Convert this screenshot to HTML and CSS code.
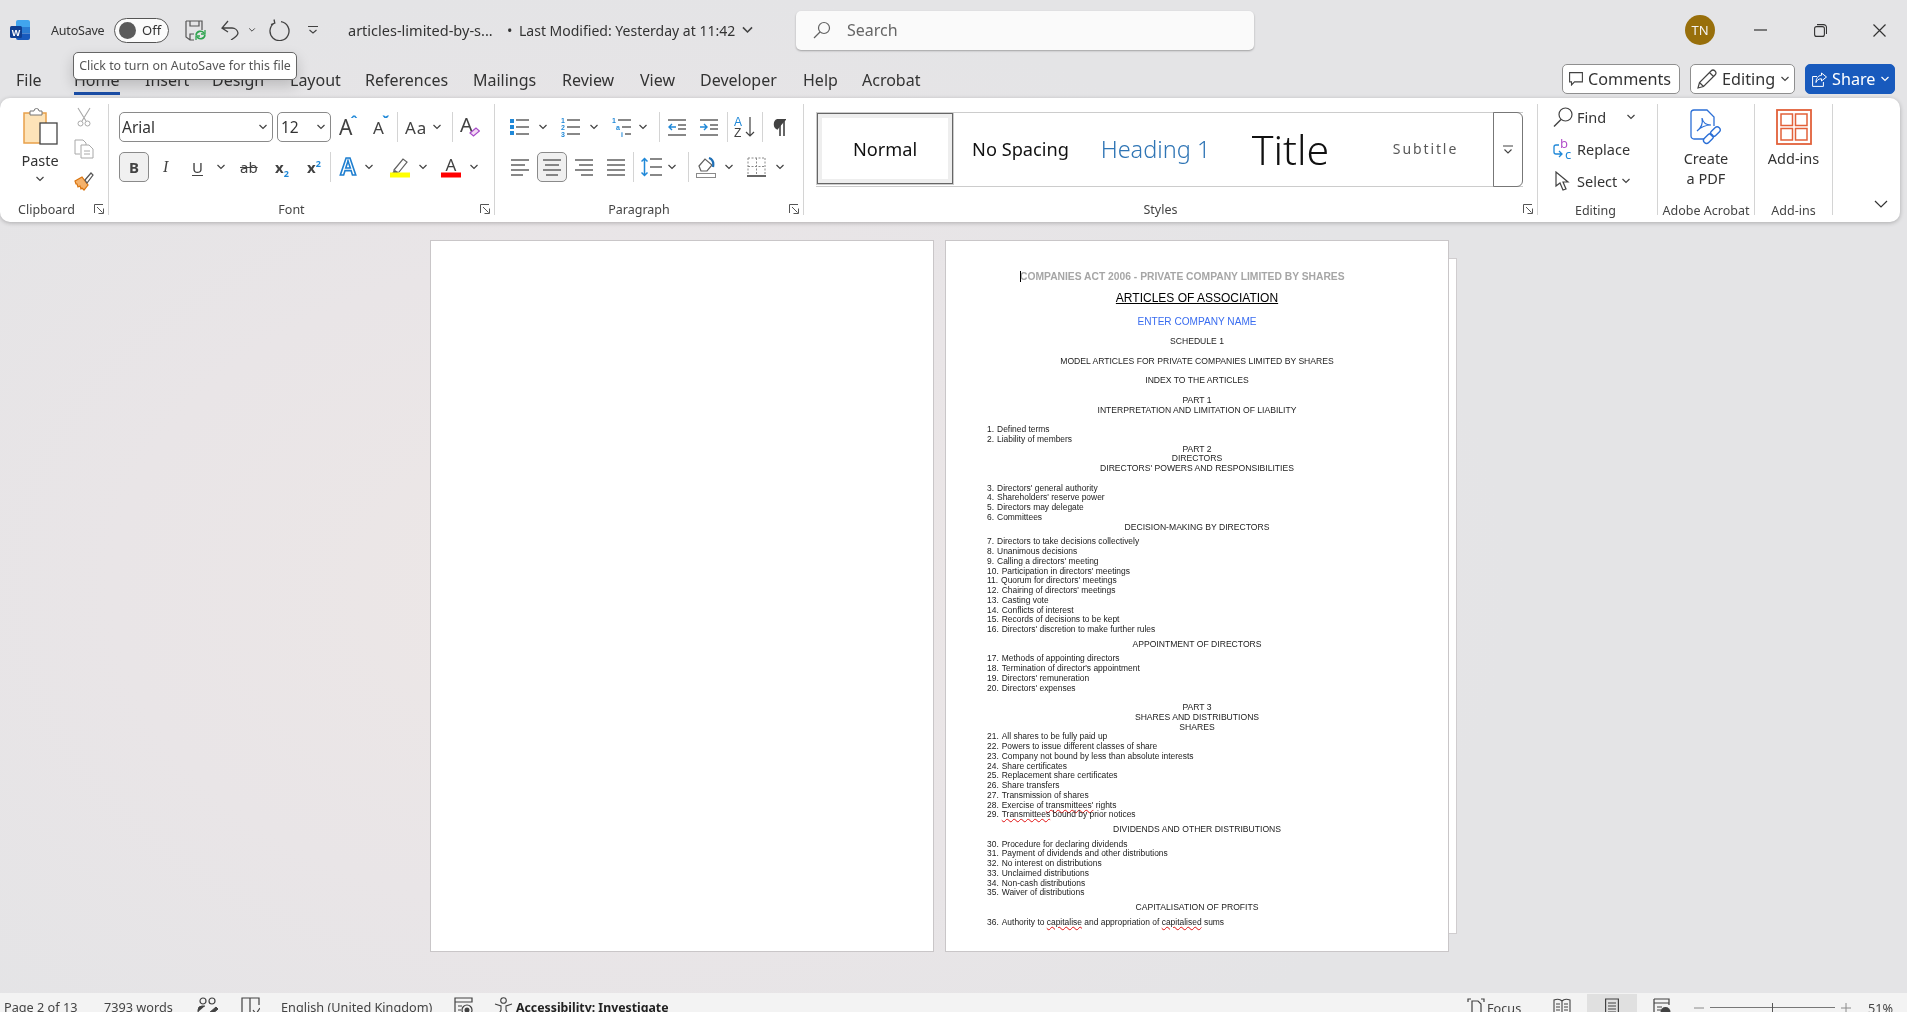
FILE: index.html
```html
<!DOCTYPE html>
<html lang="en">
<head>
    <meta charset="UTF-8">
    <title>articles-limited-by-shares - Word</title>
    <link rel="stylesheet" href="styles.css">
</head>
<body>
    <svg class="sprite" aria-hidden="true">
        <symbol id="chev" viewBox="0 0 10 6"><path d="M1.500 1l3.500 3.500L8.500 1" fill="none" stroke="#424242" stroke-width="1.200"/></symbol>
        <symbol id="launch" viewBox="0 0 10 10"><path d="M.5 9V.5H9M3 3l5.500 5.500M4.500 9.500h5v-5" fill="none" stroke="#555" stroke-width="1"/></symbol>
        <symbol id="lines-left" viewBox="0 0 20 20"><path d="M1 3h18M1 8h14M1 13h18M1 18h12" stroke="#616161" stroke-width="1.500"/></symbol>
    </svg>

    <header class="titlebar">
        <svg class="word-logo" viewBox="0 0 20 20" width="20" height="20">
            <path d="M6 2a2 2 0 0 1 2-2h10a2 2 0 0 1 2 2v5H6z" fill="#41a5ee"/>
            <rect x="6" y="7" width="14" height="6.500" fill="#2b7cd3"/>
            <path d="M6 13.500h14V18a2 2 0 0 1-2 2H8a2 2 0 0 1-2-2z" fill="#185abd"/>
            <rect x="0" y="6" width="12" height="12" rx="1.500" fill="#103f91"/>
            <text x="6" y="15.500" class="word-w">W</text>
        </svg>
        <span class="autosave">AutoSave</span>
        <div class="toggle"><span class="knob"></span><span>Off</span></div>
        <svg width="21" height="21" viewBox="0 0 21 21"><path d="M1 1h16v9M1 1v16l4 3h4M5 1v5h9V1M5 20v-6h4" fill="none" stroke="#555" stroke-width="1.200"/><path d="M11 15a4.500 4.500 0 0 1 8-2M20 15a4.500 4.500 0 0 1-8 2" fill="none" stroke="#2ea44f" stroke-width="1.600"/><path d="M20 10v4h-4M11 20v-4h4" fill="none" stroke="#2ea44f" stroke-width="1.300"/></svg>
        <svg width="19" height="20" viewBox="0 0 19 20"><path d="M1 8h10a6 6 0 0 1 6 5c0 2-2 4-7 7M7 1L1 8l6 4" fill="none" stroke="#424242" stroke-width="1.300"/></svg>
        <svg class="chev" width="8" height="6"><use href="#chev"/></svg>
        <svg width="22" height="22" viewBox="0 0 22 22"><path d="M6.500 4A9.500 9.500 0 1 0 13 2.700M6 .5L6.800 4 3 5.500" fill="none" stroke="#424242" stroke-width="1.300"/></svg>
        <svg width="10" height="8" viewBox="0 0 10 8"><path d="M0 .5h10M1.500 4l3.500 3 3.500-3" fill="none" stroke="#424242" stroke-width="1.100"/></svg>
        <span class="doc-name">articles-limited-by-s...</span>
        <span class="doc-name">&bull;</span>
        <span class="doc-name modified">Last Modified: Yesterday at 11:42</span>
        <svg width="13" height="8"><use href="#chev"/></svg>
        <div class="search">
            <svg width="18" height="18" viewBox="0 0 18 18"><circle cx="11" cy="7" r="5.500" fill="none" stroke="#616161" stroke-width="1.200"/><path d="M7 11l-6 6" stroke="#616161" stroke-width="1.200"/></svg>
            <span>Search</span>
        </div>
        <div class="avatar">TN</div>
        <svg width="13" height="2"><path d="M0 1h13" stroke="#333" stroke-width="1.200"/></svg>
        <svg width="13" height="13" viewBox="0 0 13 13"><rect x=".6" y="2.600" width="9.800" height="9.800" rx="2" fill="none" stroke="#333" stroke-width="1.100"/><path d="M3 .6h6.500a3 3 0 0 1 3 3V10" fill="none" stroke="#333" stroke-width="1.100"/></svg>
        <svg width="13" height="13" viewBox="0 0 13 13"><path d="M.5.5l12 12M12.500.5l-12 12" stroke="#333" stroke-width="1.200"/></svg>
    </header>

    <div class="tabbar">
        <nav class="tabs">
            <a>File</a><a class="active">Home</a><a>Insert</a><a>Design</a><a>Layout</a><a>References</a><a>Mailings</a><a>Review</a><a>View</a><a>Developer</a><a>Help</a><a>Acrobat</a>
        </nav>
        <div class="actions">
            <button class="comments">
                <svg width="14" height="14" viewBox="0 0 14 14"><path d="M.6.6h12.800v9.300H5.500L2.500 13v-3.100H.6z" fill="none" stroke="#424242" stroke-width="1.100"/></svg>
                Comments
            </button>
            <button class="editing">
                <svg width="20" height="20" viewBox="0 0 20 20"><path d="M1 19l1.500-5.500L14 2a2.500 2.500 0 0 1 4 4L6.500 17.500zM2.500 13.500l4 4M12.500 3.500l4 4" fill="none" stroke="#424242" stroke-width="1.200"/></svg>
                Editing
                <svg width="10" height="6"><use href="#chev"/></svg>
            </button>
            <button class="share">
                <svg width="15" height="15" viewBox="0 0 15 15"><path d="M5 4.500H.6v9.900h10.800V10M9.500 1l5 4-5 4V6.800C6.500 6.800 5 8 4 10.500 4 6.500 6 3.500 9.500 3.300z" fill="none" stroke="#fff" stroke-width="1"/></svg>
                Share
                <svg class="white-chev" width="10" height="6" viewBox="0 0 10 6"><path d="M1.500 1l3.500 3.500L8.500 1" fill="none" stroke="#fff" stroke-width="1.200"/></svg>
            </button>
        </div>
        <div class="tooltip">Click to turn on AutoSave for this file</div>
    </div>

    <section class="ribbon">
        <div class="group clipboard">
            <div class="clip-body">
                <div class="paste">
                    <svg width="35" height="38" viewBox="0 0 35 38"><rect x="1" y="6" width="22" height="30" fill="#fde3b8" stroke="#e8a04a" stroke-width="1.500"/><path d="M7 6V4h4a2.500 2.500 0 0 1 5 0h3v4H7z" fill="#fff" stroke="#777"/><rect x="17" y="16" width="17" height="21" fill="#fff" stroke="#444" stroke-width="1.300"/></svg>
                    <span>Paste</span>
                    <svg width="10" height="6"><use href="#chev"/></svg>
                </div>
                <div class="clip-tools">
                    <svg width="14" height="20" viewBox="0 0 14 20"><path d="M1 1l8 13M13 1L5 14" stroke="#a8a8a8" stroke-width="1.100"/><circle cx="3.500" cy="16.500" r="2.500" fill="none" stroke="#a8a8a8"/><circle cx="10.500" cy="16.500" r="2.500" fill="none" stroke="#a8a8a8"/></svg>
                    <svg width="20" height="20" viewBox="0 0 20 20"><path d="M1 1h8l3 3v2M1 1v14h5" fill="none" stroke="#a8a8a8"/><path d="M7 6h8l4 4v9H7z" fill="#fff" stroke="#a8a8a8"/><path d="M10 12h6M10 15h6" stroke="#a8a8a8"/></svg>
                    <svg width="20" height="20" viewBox="0 0 20 20"><path d="M1 10l7-4 6 8-4 5-2-2-1 1-1-3-2 1-1-3-1 0z" fill="#f5b26b" stroke="#d9730d" stroke-width="1.200"/><path d="M11 9l6-7 2 2-6 8z" fill="#fff" stroke="#555" stroke-width="1.200"/></svg>
                </div>
            </div>
            <div class="foot"><span>Clipboard</span><svg width="10" height="10"><use href="#launch"/></svg></div>
        </div>

        <div class="group font">
            <div class="row font-top">
                <div class="select font-name"><span>Arial</span><svg width="10" height="6"><use href="#chev"/></svg></div>
                <div class="select font-size"><span>12</span><svg width="10" height="6"><use href="#chev"/></svg></div>
                <span class="glyph big-a">A<sup class="hat">&#710;</sup></span>
                <span class="glyph mid-a">A<sup class="hat">&#711;</sup></span>
                <i class="sep"></i>
                <span class="glyph case-a">Aa</span>
                <svg width="10" height="6"><use href="#chev"/></svg>
                <i class="sep"></i>
                <svg width="20" height="22" viewBox="0 0 20 22"><text x="0" y="16" class="svg-a">A</text><path d="M10 17l6-5 3.500 3-6 5z" fill="#f4d9f4" stroke="#a64ac9" stroke-width="1.200"/></svg>
            </div>
            <div class="row font-bottom">
                <span class="box bold">B</span>
                <span class="glyph italic">I</span>
                <span class="glyph under">U</span>
                <svg width="10" height="6"><use href="#chev"/></svg>
                <span class="glyph strike">ab</span>
                <span class="glyph script">x<sub>2</sub></span>
                <span class="glyph script">x<sup>2</sup></span>
                <i class="sep"></i>
                <svg width="20" height="20" viewBox="0 0 20 20"><text x="10" y="18" class="svg-effect">A</text></svg>
                <svg width="10" height="6"><use href="#chev"/></svg>
                <svg width="20" height="21" viewBox="0 0 20 21"><path d="M4 13L13 2l4 3-8 10-5 1z" fill="#fff" stroke="#616161" stroke-width="1.200"/><path d="M2 16l3-3 3 2z" fill="#616161"/><rect y="15.500" width="20" height="5" fill="#ffff00"/></svg>
                <svg width="10" height="6"><use href="#chev"/></svg>
                <svg width="20" height="21" viewBox="0 0 20 21"><text x="10" y="14" class="svg-color">A</text><rect y="15.500" width="20" height="5" fill="#f00"/></svg>
                <svg width="10" height="6"><use href="#chev"/></svg>
            </div>
            <div class="foot"><span>Font</span><svg width="10" height="10"><use href="#launch"/></svg></div>
        </div>

        <div class="group paragraph">
            <div class="row para-top">
                <svg width="19" height="18" viewBox="0 0 19 18"><path d="M0 1h4v4H0zM0 7h4v4H0zM0 13h4v4H0z" fill="#1f88d8"/><path d="M6 2h13M6 9h13M6 16h13" stroke="#616161" stroke-width="1.400"/></svg>
                <svg width="10" height="6"><use href="#chev"/></svg>
                <svg width="19" height="20" viewBox="0 0 19 20"><text x="0" y="6" class="svg-num">1</text><text x="0" y="13" class="svg-num">2</text><text x="0" y="20" class="svg-num">3</text><path d="M6 3h13M6 10h13M6 17h13" stroke="#616161" stroke-width="1.400"/></svg>
                <svg width="10" height="6"><use href="#chev"/></svg>
                <svg width="19" height="20" viewBox="0 0 19 20"><text x="0" y="6" class="svg-num">1</text><text x="4" y="13" class="svg-num">a</text><text x="9" y="20" class="svg-num">i</text><path d="M6 3h13M10 10h9M13 17h6" stroke="#616161" stroke-width="1.400"/></svg>
                <svg width="10" height="6"><use href="#chev"/></svg>
                <i class="sep"></i>
                <svg width="18" height="17" viewBox="0 0 18 17"><path d="M0 1h18M10 6h8M10 10h8M0 16h18" stroke="#616161" stroke-width="1.400"/><path d="M8 8H1M4 5L1 8l3 3" fill="none" stroke="#1f88d8" stroke-width="1.400"/></svg>
                <svg width="18" height="17" viewBox="0 0 18 17"><path d="M0 1h18M10 6h8M10 10h8M0 16h18" stroke="#616161" stroke-width="1.400"/><path d="M0 8h7M4 5l3 3-3 3" fill="none" stroke="#1f88d8" stroke-width="1.400"/></svg>
                <i class="sep"></i>
                <svg width="21" height="22" viewBox="0 0 21 22"><text x="0" y="10" class="svg-az blue">A</text><text x="0" y="21" class="svg-az">Z</text><path d="M16 1v19M12 16l4 4 4-4" fill="none" stroke="#424242" stroke-width="1.200"/></svg>
                <i class="sep"></i>
                <svg width="13" height="17" viewBox="0 0 13 17"><path d="M5 10a5 5 0 0 1 0-9.500h8M7 1v16M11 1v16" fill="#424242" stroke="#424242" stroke-width="1.600"/></svg>
            </div>
            <div class="row para-bottom">
                <svg width="20" height="20"><use href="#lines-left"/></svg>
                <span class="box"><svg width="20" height="20" viewBox="0 0 20 20"><path d="M1 3h18M3 8h14M1 13h18M4 18h12" stroke="#616161" stroke-width="1.500"/></svg></span>
                <svg width="20" height="20" viewBox="0 0 20 20"><path d="M1 3h18M5 8h14M1 13h18M7 18h12" stroke="#616161" stroke-width="1.500"/></svg>
                <svg width="20" height="20" viewBox="0 0 20 20"><path d="M1 3h18M1 8h18M1 13h18M1 18h18" stroke="#616161" stroke-width="1.500"/></svg>
                <i class="sep"></i>
                <svg width="21" height="20" viewBox="0 0 21 20"><path d="M9 2h12M9 10h12M9 18h12" stroke="#616161" stroke-width="1.400"/><path d="M3.500 1v18M.5 4.500l3-3 3 3M.5 15.500l3 3 3-3" fill="none" stroke="#1f88d8" stroke-width="1.500"/></svg>
                <svg width="10" height="6"><use href="#chev"/></svg>
                <i class="sep"></i>
                <svg width="20" height="21" viewBox="0 0 20 21"><path d="M3 9l6-7 7 6-5 6H5z" fill="#fff" stroke="#616161" stroke-width="1.200"/><path d="M13 1c3 1 5 4 4 9" fill="none" stroke="#1f6fb5" stroke-width="2.200"/><rect x=".5" y="16.500" width="19" height="4" fill="#fff" stroke="#8a8a8a"/></svg>
                <svg width="10" height="6"><use href="#chev"/></svg>
                <svg width="19" height="20" viewBox="0 0 19 20"><path d="M1 1h17M1 1v17M18 1v17M9.500 1v17M1 9.500h17" fill="none" stroke="#8a8a8a" stroke-dasharray="2 1.500"/><path d="M0 19h19" stroke="#424242" stroke-width="1.600"/></svg>
                <svg width="10" height="6"><use href="#chev"/></svg>
            </div>
            <div class="foot"><span>Paragraph</span><svg width="10" height="10"><use href="#launch"/></svg></div>
        </div>

        <div class="group styles">
            <div class="gallery">
                <div class="style-item selected">Normal</div>
                <div class="style-item">No Spacing</div>
                <div class="style-item heading">Heading 1</div>
                <div class="style-item title-style">Title</div>
                <div class="style-item subtitle">Subtitle</div>
                <div class="more"><svg width="10" height="9" viewBox="0 0 10 9"><path d="M0 1h10M1.500 4.500L5 8l3.500-3.500" fill="none" stroke="#424242" stroke-width="1.100"/></svg></div>
            </div>
            <div class="foot"><span>Styles</span><svg width="10" height="10"><use href="#launch"/></svg></div>
        </div>

        <div class="group editing-group">
            <div class="edit-list">
                <div class="edit-row">
                    <svg width="20" height="20" viewBox="0 0 20 20"><circle cx="12.500" cy="7.500" r="6.500" fill="none" stroke="#424242" stroke-width="1.200"/><path d="M8 12.500L1 19.500" stroke="#424242" stroke-width="1.400"/></svg>
                    <span>Find</span><svg class="find-chev" width="10" height="6"><use href="#chev"/></svg>
                </div>
                <div class="edit-row">
                    <svg width="20" height="20" viewBox="0 0 20 20"><text x="7" y="9" class="svg-b">b</text><text x="12" y="20" class="svg-c">c</text><path d="M6 6H3a2 2 0 0 0-2 2v5a2 2 0 0 0 2 2h6M6 12l3 3-3 3" fill="none" stroke="#1f88d8" stroke-width="1.300"/></svg>
                    <span>Replace</span>
                </div>
                <div class="edit-row">
                    <svg width="20" height="20" viewBox="0 0 20 20"><path d="M3 1v14l4-3 3 7 3-1-3-7h5z" fill="#fff" stroke="#424242" stroke-width="1.200"/></svg>
                    <span>Select</span><svg width="10" height="6"><use href="#chev"/></svg>
                </div>
            </div>
            <div class="foot plain"><span>Editing</span></div>
        </div>

        <div class="group acrobat">
            <div class="big-btn">
                <svg width="32" height="36" viewBox="0 0 32 36"><path d="M15 30H4a3 3 0 0 1-3-3V4a3 3 0 0 1 3-3h13l7 7v9" fill="none" stroke="#2b6fd6" stroke-width="1.300"/><path d="M7 22c4-3 6-8 5-13 1 5 4 7 9 7-5 0-9 1-14 6z" fill="none" stroke="#2b6fd6" stroke-width="1.200"/><rect x="13" y="27" width="11" height="6" rx="3" transform="rotate(-45 18 30)" fill="#fff" stroke="#2b6fd6" stroke-width="1.400"/><rect x="20" y="20" width="11" height="6" rx="3" transform="rotate(-45 25 23)" fill="none" stroke="#2b6fd6" stroke-width="1.400"/></svg>
                <span>Create<br>a PDF</span>
            </div>
            <div class="foot plain"><span>Adobe Acrobat</span></div>
        </div>

        <div class="group addins">
            <div class="big-btn">
                <svg width="36" height="36" viewBox="0 0 36 36"><rect x="1" y="1" width="34" height="34" fill="none" stroke="#e2613a" stroke-width="1.800"/><rect x="5" y="5" width="11.500" height="11.500" fill="none" stroke="#e2613a" stroke-width="1.500"/><rect x="19.500" y="5" width="11.500" height="11.500" fill="none" stroke="#e2613a" stroke-width="1.500"/><rect x="5" y="19.500" width="11.500" height="11.500" fill="none" stroke="#e2613a" stroke-width="1.500"/><rect x="19.500" y="19.500" width="11.500" height="11.500" fill="none" stroke="#e2613a" stroke-width="1.500"/></svg>
                <span>Add-ins</span>
            </div>
            <div class="foot plain"><span>Add-ins</span></div>
        </div>

        <svg class="collapse" width="14" height="8" viewBox="0 0 14 8"><path d="M1 1l6 6 6-6" fill="none" stroke="#333" stroke-width="1.200"/></svg>
    </section>

    <main class="doc-area">
        <div class="page"></div>
        <div class="page">
            <div class="doc-text">
                <p class="companies"><span class="caret"></span>COMPANIES ACT 2006 - PRIVATE COMPANY LIMITED BY SHARES</p>
                <p class="ln articles">ARTICLES OF ASSOCIATION</p>
                <p class="ln enter">ENTER COMPANY NAME</p>
                <p class="ln t4">SCHEDULE 1</p>
                <p class="ln g2">MODEL ARTICLES FOR PRIVATE COMPANIES LIMITED BY SHARES</p>
                <p class="ln g2">INDEX TO THE ARTICLES</p>
                <p class="ln g2">PART 1</p>
                <p class="ln">INTERPRETATION AND LIMITATION OF LIABILITY</p>
                <p class="it g2"><span class="num">1.</span>Defined terms</p>
                <p class="it"><span class="num">2.</span>Liability of members</p>
                <p class="ln">PART 2</p>
                <p class="ln">DIRECTORS</p>
                <p class="ln">DIRECTORS' POWERS AND RESPONSIBILITIES</p>
                <p class="it g2"><span class="num">3.</span>Directors' general authority</p>
                <p class="it"><span class="num">4.</span>Shareholders' reserve power</p>
                <p class="it"><span class="num">5.</span>Directors may delegate</p>
                <p class="it"><span class="num">6.</span>Committees</p>
                <p class="ln">DECISION-MAKING BY DIRECTORS</p>
                <p class="it g1"><span class="num">7.</span>Directors to take decisions collectively</p>
                <p class="it"><span class="num">8.</span>Unanimous decisions</p>
                <p class="it"><span class="num">9.</span>Calling a directors' meeting</p>
                <p class="it"><span class="num">10.</span>Participation in directors' meetings</p>
                <p class="it"><span class="num">11.</span>Quorum for directors' meetings</p>
                <p class="it"><span class="num">12.</span>Chairing of directors' meetings</p>
                <p class="it"><span class="num">13.</span>Casting vote</p>
                <p class="it"><span class="num">14.</span>Conflicts of interest</p>
                <p class="it"><span class="num">15.</span>Records of decisions to be kept</p>
                <p class="it"><span class="num">16.</span>Directors' discretion to make further rules</p>
                <p class="ln g1">APPOINTMENT OF DIRECTORS</p>
                <p class="it g1"><span class="num">17.</span>Methods of appointing directors</p>
                <p class="it"><span class="num">18.</span>Termination of director's appointment</p>
                <p class="it"><span class="num">19.</span>Directors' remuneration</p>
                <p class="it"><span class="num">20.</span>Directors' expenses</p>
                <p class="ln g2">PART 3</p>
                <p class="ln">SHARES AND DISTRIBUTIONS</p>
                <p class="ln">SHARES</p>
                <p class="it"><span class="num">21.</span>All shares to be fully paid up</p>
                <p class="it"><span class="num">22.</span>Powers to issue different classes of share</p>
                <p class="it"><span class="num">23.</span>Company not bound by less than absolute interests</p>
                <p class="it"><span class="num">24.</span>Share certificates</p>
                <p class="it"><span class="num">25.</span>Replacement share certificates</p>
                <p class="it"><span class="num">26.</span>Share transfers</p>
                <p class="it"><span class="num">27.</span>Transmission of shares</p>
                <p class="it"><span class="num">28.</span>Exercise of <span class="typo">transmittees'</span> rights</p>
                <p class="it"><span class="num">29.</span><span class="typo">Transmittees</span> bound by prior notices</p>
                <p class="ln g1">DIVIDENDS AND OTHER DISTRIBUTIONS</p>
                <p class="it g1"><span class="num">30.</span>Procedure for declaring dividends</p>
                <p class="it"><span class="num">31.</span>Payment of dividends and other distributions</p>
                <p class="it"><span class="num">32.</span>No interest on distributions</p>
                <p class="it"><span class="num">33.</span>Unclaimed distributions</p>
                <p class="it"><span class="num">34.</span>Non-cash distributions</p>
                <p class="it"><span class="num">35.</span>Waiver of distributions</p>
                <p class="ln g1">CAPITALISATION OF PROFITS</p>
                <p class="it g1"><span class="num">36.</span>Authority to <span class="typo">capitalise</span> and appropriation of <span class="typo">capitalised</span> sums</p>
            </div>
        </div>
        <div class="next-page"></div>
    </main>

    <footer class="statusbar">
        <div class="status-left">
            <span>Page 2 of 13</span>
            <span>7393 words</span>
            <svg width="21" height="20" viewBox="0 0 21 20"><circle cx="6" cy="4" r="3" fill="none" stroke="#424242" stroke-width="1.200"/><circle cx="15" cy="4" r="3" fill="none" stroke="#424242" stroke-width="1.200"/><path d="M1 15v-2a4 4 0 0 1 4-4h3M12 16l7-6 2 2-7 6-3 1z" fill="#424242" stroke="#424242"/></svg>
            <svg width="19" height="20" viewBox="0 0 19 20"><path d="M1 1h8v16H1zM9 1h9v7M12 13l3 4 4-6" fill="none" stroke="#424242" stroke-width="1.200"/></svg>
            <span>English (United Kingdom)</span>
            <svg width="19" height="20" viewBox="0 0 19 20"><path d="M1 1h17v4H1zM1 5v14h6M4 9h4M4 13h3" fill="none" stroke="#424242" stroke-width="1.200"/><circle cx="13" cy="13" r="5" fill="none" stroke="#424242" stroke-width="1.200"/><circle cx="13" cy="13" r="2.500" fill="#424242"/></svg>
            <svg width="19" height="20" viewBox="0 0 19 20"><circle cx="9.500" cy="3.500" r="2.800" fill="none" stroke="#424242" stroke-width="1.100"/><path d="M1 7l6 2v4l-3 6M18 7l-6 2v4l3 6" fill="none" stroke="#424242" stroke-width="1.100"/></svg>
            <b>Accessibility: Investigate</b>
        </div>
        <div class="status-right">
            <svg width="18" height="20" viewBox="0 0 18 20"><path d="M1 4V1h3M14 1h3v3M5 18V3h6l3 3v12" fill="none" stroke="#424242" stroke-width="1.200"/></svg>
            <span>Focus</span>
            <svg width="18" height="20" viewBox="0 0 18 20"><path d="M9 3C7 1 4 1 1 2v15c3-1 6-1 8 1 2-2 5-2 8-1V2c-3-1-6-1-8 1zM9 3v15M3 6h4M3 9h4M3 12h4M11 6h4M11 9h4M11 12h4" fill="none" stroke="#424242" stroke-width="1.100"/></svg>
            <div class="view-on"><svg width="14" height="20" viewBox="0 0 14 20"><path d="M.6 1h12.800v18H.6zM3 5h8M3 8h8M3 11h8M3 14h8" fill="none" stroke="#424242" stroke-width="1.200"/></svg></div>
            <svg width="18" height="20" viewBox="0 0 18 20"><path d="M1 1h15v6M1 1v17h6M1 5h15M4 9h5M4 12h4" fill="none" stroke="#424242" stroke-width="1.200"/><circle cx="12.500" cy="14" r="5" fill="#424242"/></svg>
            <svg width="10" height="2"><path d="M0 1h10" stroke="#8a8a8a" stroke-width="1"/></svg>
            <div class="slider"><i></i></div>
            <svg width="10" height="10" viewBox="0 0 10 10"><path d="M0 5h10M5 0v10" stroke="#8a8a8a" stroke-width="1"/></svg>
            <span>51%</span>
        </div>
    </footer>
</body>
</html>
```

FILE: styles.css
```css
* {
    box-sizing: border-box;
}
html, body {
    height: 100%;
}
body {
    margin: 0;
    height: 1012px;
    overflow: hidden;
    display: flex;
    flex-direction: column;
    font-family: "Noto Sans", "Open Sans", sans-serif;
    color: #333;
    background: radial-gradient(ellipse 900px 600px at 32% 58%, #ede7e6 0%, #e9e5e7 55%, #e4e4e6 100%);
}
.sprite {
    display: none;
}
svg {
    display: block;
}
/* the reference is a slightly soft capture */
.titlebar, .tabbar, .ribbon, .statusbar {
    filter: blur(.3px);
}

/* title bar */
.titlebar {
    height: 62px;
    flex: none;
    padding: 0 0 2px 10px;
    display: grid;
    grid-template-columns: 41px 63px 71px 36px 27px 20px 40px 40px 159px 12px 222px 55px 889px 69px 60px 59px 20px;
    align-items: center;
    justify-items: start;
    font-size: 14px;
}
.word-w {
    font: bold 9px "Liberation Sans", sans-serif;
    fill: #fff;
    text-anchor: middle;
}
.autosave {
    font-size: 12.500px;
    letter-spacing: -.2px;
}
.toggle {
    width: 55px;
    height: 25px;
    border: 1.500px solid #555;
    border-radius: 13px;
    background: #fbfbfb;
    display: flex;
    align-items: center;
    gap: 6px;
    padding-left: 4px;
    font-size: 13px;
}
.knob {
    width: 17px;
    height: 17px;
    border-radius: 50%;
    background: #5a5a5a;
}
.doc-name {
    font-size: 14.500px;
    white-space: nowrap;
}
.doc-name.modified {
    font-size: 14px;
}
.search {
    width: 458px;
    height: 39px;
    background: #fafafa;
    border-radius: 5px;
    box-shadow: 0 1px 2px rgba(0,0,0,.3);
    display: flex;
    align-items: center;
    padding-left: 17px;
    gap: 16px;
    font-size: 16px;
    color: #666;
}
.avatar {
    width: 30px;
    height: 30px;
    border-radius: 50%;
    background: #986f0b;
    color: #f3f3f3;
    font-size: 13px;
    display: flex;
    align-items: center;
    justify-content: center;
}

/* tabs and right side buttons */
.tabbar {
    height: 36px;
    flex: none;
    position: relative;
    display: flex;
    justify-content: space-between;
    padding-left: 16px;
}
.tabs {
    display: grid;
    grid-template-columns: 58px 71px 67px 78px 75px 108px 89px 78px 60px 103px 59px 60px;
    justify-items: start;
    font-size: 16px;
    line-height: 36px;
    color: #333;
}
.tabs a {
    position: relative;
}
.tabs a.active::after {
    content: '';
    position: absolute;
    left: 0;
    right: 0;
    top: 30px;
    height: 3px;
    background: #1b4fa8;
}
.actions {
    display: flex;
    gap: 10px;
    padding: 2px 12px 0 0;
}
.actions button {
    height: 30px;
    border: 1px solid #8f8f8f;
    border-radius: 5px;
    background: #fff;
    font: 16.200px "Noto Sans", sans-serif;
    color: #333;
    display: flex;
    align-items: center;
    gap: 5px;
    padding: 0 0 0 6px;
}
.comments {
    width: 118px;
}
.editing {
    width: 105px;
}
.actions .share {
    width: 90px;
    background: #185abd;
    border-color: #185abd;
    color: #fff;
}
.tooltip {
    position: absolute;
    left: 73px;
    top: -10px;
    width: 224px;
    height: 28px;
    background: #fff;
    border: 1px solid #666;
    border-radius: 5px;
    box-shadow: 0 6px 14px rgba(0,0,0,.18);
    font-size: 12.400px;
    line-height: 26px;
    color: #555;
    text-align: center;
    white-space: nowrap;
}

/* ribbon */
.ribbon {
    height: 124px;
    flex: none;
    width: 1900px;
    background: #fff;
    border-radius: 10px;
    box-shadow: 0 1px 4px rgba(0,0,0,.25);
    padding-top: 6px;
    display: flex;
    font-size: 14px;
}
.group {
    height: 111px;
    flex: none;
    border-right: 1px solid #d4d4d4;
    display: flex;
    flex-direction: column;
}
.clipboard {
    width: 109px;
}
.font {
    width: 386px;
    padding: 8px 0 0 10px;
}
.paragraph {
    width: 309px;
    padding: 8px 0 0 15px;
}
.styles {
    width: 734px;
    padding: 8px 0 0 12px;
}
.editing-group {
    width: 120px;
    padding-left: 15px;
}
.acrobat {
    width: 97px;
}
.addins {
    width: 78px;
}
.foot {
    margin-top: auto;
    height: 12px;
    display: flex;
    align-items: center;
    font-size: 12.500px;
    color: #444;
    padding-right: 4px;
}
.foot span {
    flex: 1;
    text-align: center;
    padding-right: 6px;
}
.clipboard .foot span {
    padding-right: 1px;
}
.font .foot {
    margin-left: -10px;
}
.paragraph .foot {
    margin-left: -15px;
}
.styles .foot {
    margin-left: -12px;
}
.editing-group .foot {
    margin-left: -19px;
}
.foot.plain {
    padding: 2px 0 0;
}
.foot.plain span {
    padding: 0;
    white-space: nowrap;
}
.row {
    display: grid;
    height: 30px;
    align-items: center;
    justify-items: start;
}
.font-top {
    grid-template-columns: 158px 62px 34px 24px 8px 27px 20px 8px 20px;
}
.font-bottom {
    margin-top: 10px;
    grid-template-columns: 43px 30px 24px 24px 35px 32px 23px 8px 26px 26px 28px 23px 28px 10px;
}
.para-top {
    grid-template-columns: 28px 23px 28px 23px 26px 21px 9px 32px 27px 7px 28px 11px 13px;
}
.para-bottom {
    margin-top: 10px;
    grid-template-columns: 27px 37px 32px 27px 8px 26px 21px 8px 28px 23px 28px 10px;
}
.sep {
    width: 1px;
    height: 30px;
    background: #d4d4d4;
}
.select {
    height: 30px;
    border: 1px solid #8a8a8a;
    border-radius: 5px;
    display: flex;
    align-items: center;
    justify-content: space-between;
    padding: 0 4px 0 2px;
    font-size: 15.500px;
    color: #333;
}
.font-name {
    width: 154px;
}
.font-size {
    width: 54px;
    padding-left: 3px;
}
.glyph {
    color: #424242;
    line-height: 1;
    white-space: nowrap;
}
.big-a {
    font-size: 21px;
}
.mid-a {
    font-size: 17px;
}
.hat {
    color: #1f88d8;
    font-size: 15px;
    line-height: 0;
    font-weight: bold;
    margin-left: -2px;
}
.case-a {
    font-size: 17px;
    letter-spacing: 1px;
}
.box {
    width: 30px;
    height: 30px;
    border: 1px solid #8a8a8a;
    border-radius: 5px;
    background: #f0f0f0;
    display: flex;
    align-items: center;
    justify-content: center;
}
.bold {
    font-weight: bold;
    font-size: 15px;
    color: #424242;
}
.italic {
    font: italic 16px "Liberation Serif", serif;
    padding-left: 1px;
}
.under {
    font-size: 15px;
    text-decoration: underline;
    text-underline-offset: 2px;
}
.strike {
    font-size: 15px;
    text-decoration: line-through;
}
.script {
    font-weight: bold;
    font-size: 15px;
}
.script sub, .script sup {
    font-size: 9px;
    color: #1f88d8;
    line-height: 0;
}
.svg-a {
    font: 20px "Noto Sans", sans-serif;
    fill: #424242;
}
.svg-effect {
    font: bold 23px "Liberation Sans", sans-serif;
    fill: #fff;
    stroke: #1f7fd0;
    stroke-width: 1.600px;
    text-anchor: middle;
}
.svg-color {
    font: 17px "Noto Sans", sans-serif;
    fill: #424242;
    text-anchor: middle;
}
.svg-num {
    font: bold 7px "Liberation Sans", sans-serif;
    fill: #1f88d8;
}
.svg-az {
    font: 12px "Liberation Sans", sans-serif;
    fill: #424242;
}
.svg-az.blue {
    fill: #1f88d8;
}
.svg-b {
    font: 13px "Noto Sans", sans-serif;
    fill: #b24fc9;
}
.svg-c {
    font: 13px "Noto Sans", sans-serif;
    fill: #1f88d8;
}

/* clipboard */
.clip-body {
    display: flex;
    padding: 3px 0 0 22px;
}
.paste {
    width: 36px;
    display: flex;
    flex-direction: column;
    align-items: center;
    font-size: 14.500px;
    color: #333;
}
.paste span {
    margin: 5px 0 6px;
    line-height: 20px;
}
.clip-tools {
    margin-left: 16px;
    display: flex;
    flex-direction: column;
    align-items: center;
    gap: 12px;
}

/* style gallery */
.gallery {
    width: 707px;
    height: 75px;
    display: flex;
    border-top: 1px solid #ccc;
    border-bottom: 1px solid #ccc;
}
.style-item {
    width: 135px;
    height: 71px;
    display: flex;
    align-items: center;
    justify-content: center;
    font-size: 18.200px;
    color: #111;
    white-space: nowrap;
}
.style-item.selected {
    width: 136px;
    margin-left: 1px;
    border: 1px solid #666;
    box-shadow: inset 0 0 0 4px #eee, 0 0 0 1px #ccc;
}
.heading {
    font-size: 23.500px;
    font-weight: 300;
    color: #2f75b5;
}
.title-style {
    font-size: 41px;
    font-weight: 300;
}
.subtitle {
    font-size: 14px;
    letter-spacing: 1.900px;
    color: #595959;
}
.more {
    width: 30px;
    height: 75px;
    margin-top: -1px;
    border: 1px solid #777;
    border-radius: 0 6px 6px 0;
    display: flex;
    align-items: center;
    justify-content: center;
}

/* editing group */
.edit-list {
    margin-top: -1px;
    display: flex;
    flex-direction: column;
    gap: 4px;
}
.edit-row {
    height: 28px;
    display: flex;
    align-items: center;
    gap: 4px;
    font-size: 14.500px;
}
.find-chev {
    margin-left: 16px;
}

/* big buttons */
.big-btn {
    padding-top: 5px;
    display: flex;
    flex-direction: column;
    align-items: center;
    gap: 3px;
    text-align: center;
    font-size: 14.500px;
    line-height: 20px;
}
.collapse {
    margin: 96px 0 0 41px;
}

/* document */
.doc-area {
    flex: 1;
    min-height: 0;
    display: flex;
    align-items: flex-start;
    gap: 11px;
    padding: 18px 0 0 430px;
}
.page {
    width: 504px;
    height: 712px;
    background: #fff;
    border: 1px solid #c9c6c8;
}
.page + .page {
    padding: 31px 41px 0;
}
.next-page {
    width: 8px;
    height: 676px;
    margin: 18px 0 0 -11px;
    background: #fff;
    border: 1px solid #d0cdcf;
    border-left: 0;
}
.doc-text {
    font: 8.450px/9.750px "Liberation Sans", sans-serif;
    color: #222;
    filter: blur(.35px);
}
.doc-text p {
    margin: 0;
    height: 9.750px;
    white-space: nowrap;
}
.doc-text .ln {
    font-size: 8.600px;
    text-align: center;
}
.doc-text .companies {
    position: relative;
    padding-left: 33px;
    font-size: 10.300px;
    font-weight: bold;
    color: #a6a6a6;
}
.caret {
    position: absolute;
    left: 33px;
    top: -1px;
    width: 1px;
    height: 11px;
    background: #000;
}
.doc-text .articles {
    margin-top: 12px;
    font-size: 12px;
    color: #000;
    text-decoration: underline;
}
.doc-text .enter {
    margin-top: 13px;
    font-size: 10.100px;
    color: #3a6df0;
}
.doc-text .t4 {
    margin-top: 11px;
}
.doc-text .g1 {
    margin-top: 4.900px;
}
.doc-text .g2 {
    margin-top: 9.800px;
}
.num {
    margin-right: 3px;
}
.typo {
    text-decoration: underline wavy #e01010 1px;
    text-underline-offset: 1px;
}

/* status bar */
.statusbar {
    height: 19px;
    flex: none;
    background: #f3f3f3;
    display: flex;
    justify-content: space-between;
    overflow: hidden;
    font-size: 12.700px;
    color: #444;
}
.status-left {
    padding-left: 4px;
    height: 28px;
    display: grid;
    grid-template-columns: 100px 93px 44px 40px 173px 40px 22px 170px;
    align-items: center;
    justify-items: start;
    white-space: nowrap;
}
.status-left b {
    font-size: 12.300px;
    color: #222;
}
.status-right {
    height: 28px;
    display: grid;
    grid-template-columns: 20px 66px 34px 66px 41px 16px 131px 27px 39px;
    align-items: center;
    justify-items: start;
}
.view-on {
    width: 50px;
    height: 28px;
    margin-top: 1px;
    background: #e0e0e0;
    display: flex;
    align-items: center;
    justify-content: center;
}
.slider {
    width: 125px;
    height: 1px;
    background: #777;
    position: relative;
}
.slider i {
    position: absolute;
    left: 62px;
    top: -4px;
    width: 1px;
    height: 9px;
    background: #555;
}
```
